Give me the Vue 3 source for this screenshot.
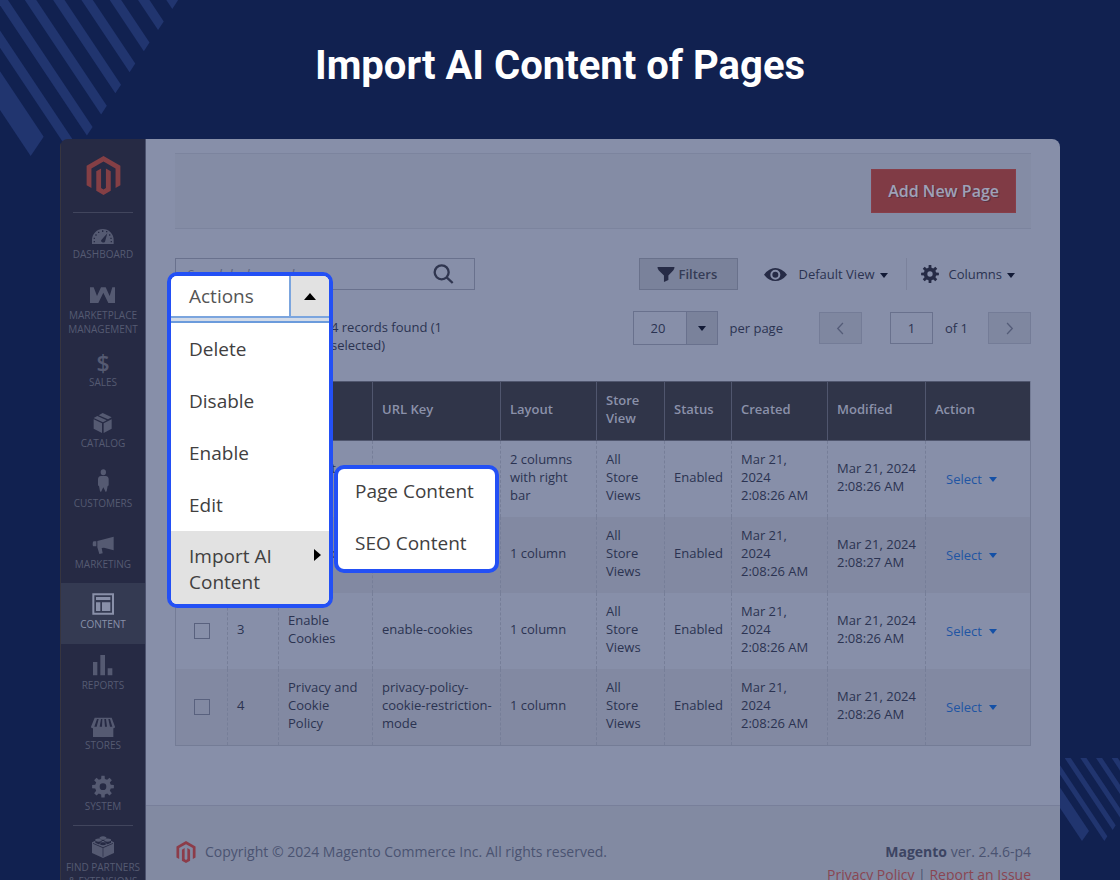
<template>
  <div class="page">
    <svg class="stripes stripes-top" viewBox="0 0 540 480" aria-hidden="true">
      <polygon v-for="(points, i) in topStripes" :key="i" :points="points" />
    </svg>
    <svg class="stripes stripes-bottom" viewBox="180 54 180 366" aria-hidden="true">
      <polygon v-for="(points, i) in bottomStripes" :key="i" :points="points" />
    </svg>

    <h1 class="title">Import AI Content of Pages</h1>

    <div class="frame">
      <nav class="sidebar" aria-label="Main menu">
        <a href="#" class="brand" aria-label="Magento">
          <svg viewBox="0 0 24 24"><path :d="logoPath" /></svg>
        </a>
        <ul class="menu">
          <li
            v-for="item in menuItems"
            :key="item.label"
            :class="['menu-item', { active: item.active, divided: item.divided }]"
          >
            <a href="#">
              <span v-if="item.glyph" class="menu-glyph">{{ item.glyph }}</span>
              <svg v-else class="menu-icon" viewBox="0 0 84 66">
                <path :d="item.icon" fill-rule="evenodd" />
              </svg>
              <span class="menu-label">{{ item.label }}</span>
            </a>
          </li>
        </ul>
      </nav>

      <main class="main">
        <div class="content">
          <div class="page-actions">
            <button class="btn-primary">Add New Page</button>
          </div>

          <div class="toolbar">
            <div class="search">
              <input type="text" placeholder="Search by keyword" aria-label="Search by keyword" />
              <button class="search-btn" aria-label="Search">
                <svg viewBox="0 0 66 63">
                  <circle cx="26" cy="25" r="21" />
                  <path d="M41 40L59 57" />
                </svg>
              </button>
            </div>
            <button class="btn-filters">
              <svg viewBox="0 0 52 44"><path d="M1 0H51Q51 6 47 10L33 25V38L20 44V25L5 10Q1 6 1 0Z" /></svg>
              Filters
            </button>
            <button class="btn-plain view">
              <svg class="eye" viewBox="0 0 69 39">
                <path fill-rule="evenodd" d="M0 20Q15 0 34 0T69 20Q53 39 34 39T0 20ZM34 5A15 15 0 1 0 34 35A15 15 0 1 0 34 5ZM34 11A9 9 0 1 1 34 29A9 9 0 1 1 34 11Z" />
              </svg>
              <span>Default View</span>
              <i class="caret"></i>
            </button>
            <button class="btn-plain columns">
              <svg class="gear" viewBox="0 0 54 54"><path :d="columnsGear" fill-rule="evenodd" /></svg>
              <span>Columns</span>
              <i class="caret"></i>
            </button>
          </div>

          <div class="toolbar-bottom">
            <div class="mass-actions">
              <div class="dropdown">
                <button class="dropdown-toggle" :aria-expanded="open" @click="open = !open">
                  <span class="toggle-text">Actions</span>
                  <span class="toggle-arrow"><i class="caret-up"></i></span>
                </button>
                <ul v-if="open" class="dropdown-list">
                  <li v-for="action in actions" :key="action"><button>{{ action }}</button></li>
                  <li class="current">
                    <button>Import AI Content <i class="caret-right"></i></button>
                  </li>
                </ul>
              </div>
              <ul v-if="open" class="submenu">
                <li><button>Page Content</button></li>
                <li><button>SEO Content</button></li>
              </ul>
            </div>
            <p class="records">4 records found (1 selected)</p>
            <div class="pager">
              <div class="page-size">
                <select id="page-size">
                  <option>20</option>
                  <option>30</option>
                  <option>50</option>
                </select>
                <span class="page-size-arrow"><i class="caret"></i></span>
              </div>
              <label class="per-page" for="page-size">per page</label>
              <button class="pager-btn" aria-label="Previous page">
                <svg viewBox="0 0 24 40"><path d="M21 3L5 20L21 37" /></svg>
              </button>
              <input id="page-number" class="page-number" type="text" value="1" />
              <label class="page-total" for="page-number">of 1</label>
              <button class="pager-btn" aria-label="Next page">
                <svg viewBox="0 0 24 40"><path d="M3 3L19 20L3 37" /></svg>
              </button>
            </div>
          </div>

          <table class="grid">
            <colgroup>
              <col class="c-check" />
              <col class="c-id" />
              <col class="c-title" />
              <col class="c-url" />
              <col class="c-layout" />
              <col class="c-store" />
              <col class="c-status" />
              <col class="c-created" />
              <col class="c-modified" />
              <col />
            </colgroup>
            <thead>
              <tr>
                <th></th>
                <th v-for="name in headers" :key="name">{{ name }}</th>
              </tr>
            </thead>
            <tbody>
              <tr v-for="row in rows" :key="row.id">
                <td class="check">
                  <input type="checkbox" :aria-label="`Select ${row.title}`" />
                </td>
                <td>{{ row.id }}</td>
                <td>{{ row.title }}</td>
                <td class="url">{{ row.url }}</td>
                <td>{{ row.layout }}</td>
                <td>All Store Views</td>
                <td>Enabled</td>
                <td>Mar 21, 2024 2:08:26 AM</td>
                <td>{{ row.modified }}</td>
                <td class="action">
                  <button>Select <i class="caret"></i></button>
                </td>
              </tr>
            </tbody>
          </table>
        </div>

        <footer class="footer">
          <div class="copyright">
            <svg viewBox="0 0 24 24"><path :d="logoPath" /></svg>
            <span>Copyright © 2024 Magento Commerce Inc. All rights reserved.</span>
          </div>
          <div class="footer-right">
            <div><strong>Magento</strong> ver. 2.4.6-p4</div>
            <div><a href="#">Privacy Policy</a> | <a href="#">Report an Issue</a></div>
          </div>
        </footer>
      </main>
    </div>
  </div>
</template>

<script setup>
import { ref } from 'vue'

const open = ref(true)

const logoPath =
  'M12 24l-4.455-2.572v-12l2.97-1.715v12.001l1.485.902 1.485-.902V7.713l2.971 1.715v12L12 24zM22.391 6v12l-2.969 1.714V7.713L12 3.43 4.574 7.713v12.001L1.609 18V6L12 0l10.391 6z'

// Outline of a cog: teeth around a disc, with a round hole
function gear(cx, cy, outer, inner, hole, teeth) {
  const points = []
  const step = (Math.PI * 2) / teeth
  for (let i = 0; i < teeth; i++) {
    const a = i * step - Math.PI / 2
    const corners = [[-0.3, inner], [-0.19, outer], [0.19, outer], [0.3, inner]]
    corners.forEach(([offset, r]) => {
      const x = cx + r * Math.cos(a + offset * step)
      const y = cy + r * Math.sin(a + offset * step)
      points.push(`${x.toFixed(1)} ${y.toFixed(1)}`)
    })
  }
  return `M${points.join('L')}ZM${cx - hole} ${cy}a${hole} ${hole} 0 1 0 ${hole * 2} 0a${hole} ${hole} 0 1 0 ${-hole * 2} 0Z`
}

const columnsGear = gear(27, 27, 27, 19, 8, 8)

// A slanted bar that runs up and left from its tip
function stripe(x, y, w, h) {
  return `${x},${y} ${x + w},${y - h} ${x + w - 400},${y - h - 600} ${x - 400},${y - 600}`
}

const topStripes = [
  stripe(92, 468, 39, 58),
  ...[0, 1, 2, 3, 4, 5, 6, 7].map((i) => stripe(218 + i * 42.7, 470 - i * 63.3, 17, 26))
]

const bottomStripes = [
  stripe(246, 303, 21, 30),
  ...[0, 1, 2, 3, 4].map((i) => stripe(313 + i * 25, 303 - i * 33, 9, 14))
]

const menuItems = [
  {
    label: 'Dashboard',
    icon: 'M9 63V51A32.500 33 0 0 1 74 51V63ZM36 54A7 7 0 0 0 48 56L55 31L37 51ZM39 22h4v5h-4ZM27 26h4v4h-4ZM19 34h4v4h-4ZM14 44h4v4h-4ZM14 54h4v4h-4ZM64 44h4v4h-4ZM65 54h4v4h-4ZM51 24h4v4h-4ZM60 34h4v4h-4Z'
  },
  {
    label: 'Marketplace Management',
    icon: 'M3 10H14L24 36L36 10H50L62 36L70 10H78V57H58L43 26L28 57H3Z'
  },
  { label: 'Sales', glyph: '$' },
  {
    label: 'Catalog',
    icon: 'M14 18L25 12L53 25L42 31ZM29 10L41 3L68 16L57 22ZM14 22L39 34V63L14 50ZM44 34L68 22V50L44 63Z'
  },
  {
    label: 'Customers',
    icon: 'M43 -8A8 9 0 1 1 43 10A8 9 0 1 1 43 -8ZM36 12H50Q59 13 59 22V38Q59 42 56 42L53 58L50 60L43 46L36 60L33 58L30 42Q27 42 27 38V22Q27 13 36 12Z'
  },
  {
    label: 'Marketing',
    icon: 'M20 25H22V40H13Q11 40 11 33T14 25H20ZM25 24L74 11V52L45 44L38 45L41 61L31 63L25 43Z'
  },
  {
    label: 'Content',
    active: true,
    icon: 'M10 1H75V65H10ZM16 7V59H69V7ZM21 12H64V21H21ZM21 28H34V54H21ZM39 28H64V54H39Z'
  },
  { label: 'Reports', icon: 'M12 24H25V64H12ZM34 3H48V64H34ZM56 43H70V64H56Z' },
  {
    label: 'Stores',
    icon: 'M17 11H68L78 38Q78 43 73 43V69H12V43Q6 43 6 38ZM24 15L16 38H23L29 15ZM36 15L32 38H39L40 15ZM46 15L48 38H54L51 15ZM58 15L63 38H70L63 15Z'
  },
  { label: 'System', icon: gear(42, 35, 33, 24, 10, 8) },
  {
    label: 'Find Partners & Extensions',
    divided: true,
    icon: 'M9 19L19 14V20L29 25L38 20V15H46V20L56 25L66 20V14L75 19V51L42 66L9 51ZM41 36V62H43V36L72 23V21L42 34L12 21V23ZM32 4Q42 -2 52 4V8Q42 14 32 8ZM19 10Q29 5 38 10V14Q29 20 19 14ZM46 10Q56 5 66 10V14Q56 20 46 14ZM32 21Q42 16 52 21V25Q42 31 32 25Z'
  }
]

const actions = ['Delete', 'Disable', 'Enable', 'Edit']

const headers = ['ID', 'Title', 'URL Key', 'Layout', 'Store View', 'Status', 'Created', 'Modified', 'Action']

const rows = [
  { id: 1, title: '404 Not Found', url: 'no-route', layout: '2 columns with right bar', modified: 'Mar 21, 2024 2:08:26 AM' },
  { id: 2, title: 'Home page', url: 'home', layout: '1 column', modified: 'Mar 21, 2024 2:08:27 AM' },
  { id: 3, title: 'Enable Cookies', url: 'enable-cookies', layout: '1 column', modified: 'Mar 21, 2024 2:08:26 AM' },
  { id: 4, title: 'Privacy and Cookie Policy', url: 'privacy-policy-cookie-restriction-mode', layout: '1 column', modified: 'Mar 21, 2024 2:08:26 AM' }
]
</script>

<style>
body {
  margin: 0;
  background: #112150;
}
</style>

<style scoped>
* {
  box-sizing: border-box;
}

.page {
  position: relative;
  display: flex;
  flex-direction: column;
  height: 100vh;
  overflow: hidden;
  background: #112150;
  color: #2b3351;
  font-family: 'Open Sans', 'Noto Sans', sans-serif;
  font-size: 13px;
  line-height: 18px;
}

button,
input,
select {
  margin: 0;
  padding: 0;
  border: 0;
  background: none;
  color: inherit;
  font: inherit;
}

button {
  cursor: pointer;
}

ul {
  margin: 0;
  padding: 0;
  list-style: none;
}

a {
  text-decoration: none;
}

.stripes {
  position: absolute;
  fill: #21356f;
}

.stripes-top {
  top: 0;
  left: 0;
  width: 180px;
  height: 160px;
}

.stripes-bottom {
  right: 0;
  bottom: 0;
  width: 60px;
  height: 122px;
}

.title {
  margin: 0;
  padding: 42px 0 49px;
  color: #fff;
  font-family: Roboto, sans-serif;
  font-size: 40px;
  font-weight: 700;
  line-height: 48px;
  text-align: center;
}

.frame {
  position: relative;
  display: flex;
  flex: 1;
  min-height: 0;
  margin: 0 60px;
  border-radius: 8px 8px 0 0;
  overflow: hidden;
}

.sidebar {
  flex: none;
  width: 86px;
  border-left: 1px solid #37353f;
  border-right: 1px solid #4b516d;
  background: #262a44;
}

.brand {
  display: flex;
  justify-content: center;
  margin: 0 12px;
  padding: 17px 0;
  border-bottom: 1px solid #41455d;
}

.brand svg {
  width: 39px;
  height: 39px;
  fill: #843f45;
}

.menu-item {
  min-height: 60px;
  color: #555a72;
}

.menu-item:nth-child(odd) {
  min-height: 61px;
}

.menu-item.active {
  background: #343a52;
  color: #8990a9;
}

.menu-item.divided::before {
  content: '';
  display: block;
  margin: 0 12px;
  border-top: 1px solid #41455d;
}

.menu-item a {
  display: flex;
  flex-direction: column;
  align-items: center;
  padding: 10px 0 5px;
  color: inherit;
}

.menu-icon {
  width: 28px;
  height: 22px;
  overflow: visible;
  fill: currentColor;
}

.menu-glyph {
  height: 22px;
  font-size: 23px;
  font-weight: 600;
  line-height: 24px;
}

.menu-label {
  max-width: 78px;
  margin-top: 2px;
  font-size: 10px;
  line-height: 14px;
  text-align: center;
  text-transform: uppercase;
}

.main {
  display: flex;
  flex: 1;
  flex-direction: column;
  min-width: 0;
  background: #878fa9;
}

.content {
  flex: none;
  padding: 14px 29px 59px;
}

.page-actions {
  display: flex;
  justify-content: flex-end;
  padding: 15px;
  border: solid #7c849e;
  border-width: 1px 0;
  background: #848ca5;
}

.btn-primary {
  height: 44px;
  padding: 0 16px;
  border: 1px solid #873e49;
  background: #803b45;
  color: #9da2b8;
  font-size: 16px;
  font-weight: 600;
  text-shadow: 1px 1px 0 #5d3040;
}

.toolbar {
  display: flex;
  align-items: center;
  margin-top: 29px;
}

.search {
  display: flex;
  align-items: center;
  width: 300px;
  height: 32px;
  margin-right: auto;
  border: 1px solid #69718d;
}

.search input {
  flex: 1;
  min-width: 0;
  padding-left: 11px;
  outline: none;
}

.search input::placeholder {
  color: #5b637f;
  font-style: italic;
  opacity: 1;
}

.search-btn {
  height: 21px;
  margin-right: 19px;
}

.search-btn svg {
  width: 22px;
  height: 21px;
  fill: none;
  stroke: #303650;
  stroke-width: 7;
}

.btn-filters {
  display: flex;
  align-items: center;
  gap: 4px;
  width: 99px;
  height: 32px;
  padding-left: 17px;
  border: 1px solid #69718b;
  background: #7a829b;
  color: #353c56;
  font-weight: 600;
}

.btn-filters svg {
  width: 18px;
  height: 15px;
  fill: #262b46;
}

.btn-plain {
  display: flex;
  align-items: center;
  height: 32px;
}

.view {
  margin-left: 26px;
}

.btn-plain .caret {
  margin: 2px 0 0 5px;
}

.eye {
  width: 23px;
  height: 13px;
  margin-right: 12px;
  fill: #262b46;
}

.columns {
  margin-left: 18px;
  padding: 0 16px 0 14px;
  border-left: 1px solid #7b829c;
}

.gear {
  width: 18px;
  height: 18px;
  margin-right: 10px;
  fill: #262b46;
}

.caret {
  display: inline-block;
  border: solid transparent;
  border-width: 5px 4px 0;
  border-top-color: #121a36;
}

.toolbar-bottom {
  display: flex;
  align-items: flex-start;
  margin-top: 21px;
}

.mass-actions {
  position: relative;
  width: 156px;
}

.dropdown {
  position: absolute;
  top: -39px;
  left: -8px;
  z-index: 2;
  width: 166px;
  border: 4px solid #2350f5;
  border-radius: 10px;
  background: #fff;
  color: #41403f;
  font-size: 19px;
  line-height: 26px;
  overflow: hidden;
}

.dropdown-toggle {
  display: flex;
  width: 100%;
  height: 47px;
  border-bottom: 2px solid #6b9bdc;
  background: #d3dbe8;
  color: #555;
}

.toggle-text,
.toggle-arrow {
  height: 42px;
  border-bottom: 2px solid #7ba5de;
}

.toggle-text {
  flex: 1;
  padding: 7px 18px;
  background: #fff;
  text-align: left;
}

.toggle-arrow {
  display: flex;
  align-items: center;
  justify-content: center;
  width: 40px;
  border-left: 2px solid #7ba5de;
  background: #e2e2e2;
}

.caret-up {
  border: solid transparent;
  border-width: 0 6px 7px;
  border-bottom-color: #000;
}

.caret-right {
  position: absolute;
  top: 18px;
  right: 8px;
  border: solid transparent;
  border-width: 6px 0 6px 7px;
  border-left-color: #000;
}

.dropdown-list button,
.submenu button {
  display: block;
  width: 100%;
  padding: 13px 18px;
  text-align: left;
}

.dropdown-list .current {
  position: relative;
  background: #e2e2e2;
}

.dropdown-list .current button {
  padding: 12px 40px 9px 18px;
}

.submenu {
  position: absolute;
  top: 154px;
  left: 159px;
  z-index: 2;
  width: 165px;
  border: 4px solid #2350f5;
  border-radius: 10px;
  background: #fff;
  color: #41403f;
  font-size: 19px;
  line-height: 26px;
}

.submenu li:first-child {
  margin-top: -4px;
}

.submenu button {
  padding: 13px 0 13px 17px;
}

.records {
  width: 130px;
  margin: 0 auto 0 0;
  padding-top: 7px;
}

.pager {
  display: flex;
  align-items: center;
  height: 34px;
}

.page-size {
  position: relative;
}

.page-size select {
  width: 85px;
  height: 34px;
  padding-left: 17px;
  border: 1px solid #69718d;
  appearance: none;
}

.page-size-arrow {
  position: absolute;
  top: 0;
  right: 0;
  display: flex;
  align-items: center;
  justify-content: center;
  width: 32px;
  height: 34px;
  border: 1px solid #69718d;
  background: #7a829b;
  pointer-events: none;
}

.per-page {
  margin: 0 36px 0 12px;
}

.pager-btn {
  display: flex;
  align-items: center;
  justify-content: center;
  width: 43px;
  height: 32px;
  border: 1px solid #747c97;
  background: #7f87a0;
}

.pager-btn svg {
  width: 8px;
  height: 13px;
  fill: none;
  stroke: #545c78;
  stroke-width: 4;
}

.page-number {
  width: 43px;
  height: 32px;
  margin: 0 12px 0 28px;
  border: 1px solid #69718d;
  text-align: center;
}

.page-total {
  margin-right: 20px;
}

.grid {
  width: 100%;
  margin-top: 27px;
  border: 1px solid #747c96;
  border-top: 0;
  border-spacing: 0;
  table-layout: fixed;
}

.c-check {
  width: 52px;
}

.c-id {
  width: 51px;
}

.c-title {
  width: 94px;
}

.c-url {
  width: 128px;
}

.c-layout,
.c-created {
  width: 96px;
}

.c-store {
  width: 68px;
}

.c-status {
  width: 67px;
}

.c-modified {
  width: 98px;
}

.grid th {
  height: 60px;
  padding: 0 9px 5px;
  border: solid #50566e;
  border-width: 1px 1px 1px 0;
  background: #303549;
  color: #8b91aa;
  font-weight: 600;
  text-align: left;
}

.grid td {
  height: 76px;
  padding: 9px 9px 13px;
  border-right: 1px dashed #767e98;
}

.grid th:last-child,
.grid td:last-child {
  border-right: 0;
}

.grid tbody tr:nth-child(even) td {
  background: #8289a2;
}

.grid .url {
  padding-right: 4px;
}

.grid .check {
  padding: 10px 0 12px;
  text-align: center;
}

.check input {
  width: 16px;
  height: 16px;
  border: 1px solid #59617e;
  appearance: none;
  vertical-align: middle;
}

.grid .action {
  padding: 11px 0 11px 20px;
}

.action button {
  color: #1f55a3;
}

.action .caret {
  margin: 0 0 2px 4px;
  border-top-color: #1450a6;
}

.footer {
  display: flex;
  flex: 1 0 auto;
  justify-content: space-between;
  align-items: flex-start;
  padding: 34px 29px;
  border-top: 1px solid #787f9a;
  background: #828aa2;
  color: #4a5371;
  font-size: 14px;
  line-height: 23px;
}

.copyright {
  display: flex;
  align-items: center;
  gap: 8px;
}

.copyright svg {
  width: 22px;
  height: 22px;
  fill: #8c3c49;
}

.footer-right {
  text-align: right;
}

.footer-right strong {
  color: #3c4462;
}

.footer-right a {
  color: #8a4652;
}
</style>
